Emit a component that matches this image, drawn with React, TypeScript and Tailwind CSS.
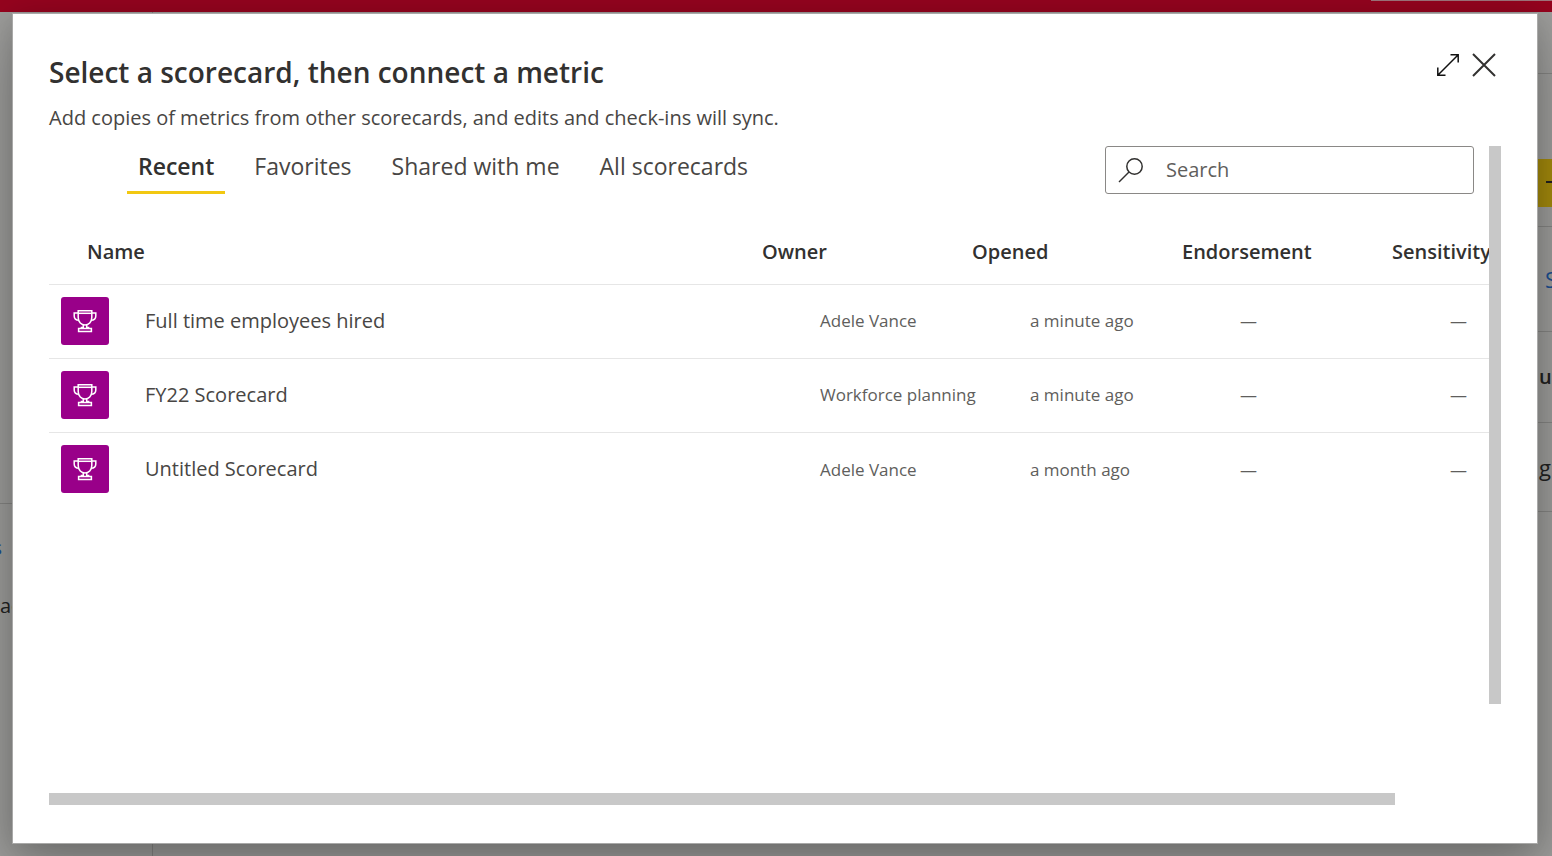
const scorecards = [
  { name: 'Full time employees hired', owner: 'Adele Vance', opened: 'a minute ago' },
  { name: 'FY22 Scorecard', owner: 'Workforce planning', opened: 'a minute ago' },
  { name: 'Untitled Scorecard', owner: 'Adele Vance', opened: 'a month ago' },
];

const tabs = ['Recent', 'Favorites', 'Shared with me', 'All scorecards'];

function TrophyIcon() {
  return (
    <svg width="24" height="24" viewBox="0 0 24 24" fill="none" stroke="#fff" strokeWidth="1.5" aria-hidden="true">
      <path d="M5.2 1.8H18.8V8.6C18.8 13 15.6 16 12 16S5.2 13 5.2 8.6Z" />
      <path d="M5.2 4.3H18.8" />
      <path d="M5.2 4H1.2V7C1.2 9.8 3 11.2 6 11.2M18.8 4H22.8V7C22.8 9.8 21 11.2 18 11.2" />
      <path d="M10.3 16V18.6H8.4V19.4M13.7 16V18.6H15.6V19.4" />
      <path d="M5.6 19.4H18.4V22.4H5.6Z" />
    </svg>
  );
}

function BackgroundPage() {
  return (
    <div className="fixed inset-0 flex flex-col overflow-hidden bg-[#9e9e9c] text-[20px] text-[#222]" aria-hidden="true">
      <div className="flex h-3 shrink-0 justify-end bg-[#96051f]">
        <div className="h-px w-[181px] bg-[#a0757c]" />
      </div>
      <div className="flex min-h-0 flex-1 justify-between">
        <div className="flex w-[153px] flex-col border-r border-[#868684]">
          <div className="h-[492px] shrink-0 border-b border-[#868684]" />
          <div className="mt-[30px] flex h-7 w-[2px] items-center justify-end overflow-hidden text-[#1d4f91]">s</div>
          <div className="mt-[30px] flex h-7 items-center">ac</div>
        </div>
        <div className="flex w-[15px] flex-col overflow-hidden">
          <div className="h-[62px] shrink-0 border-b border-[#868684]" />
          <div className="mt-[85px] flex h-12 shrink-0 items-center justify-end bg-[#a58b0c]">
            <div className="mb-[2px] h-[2px] w-[6px] bg-[#222]" />
          </div>
          <div className="h-5 shrink-0 border-b border-[#868684]" />
          <div className="flex h-[105px] shrink-0 items-center border-b border-[#868684] pl-2 text-[22px] text-[#1d4f91]">S</div>
          <div className="flex h-[91px] shrink-0 items-center border-b border-[#868684] pl-[2px] font-semibold">u</div>
          <div className="flex h-[89px] shrink-0 items-center border-b border-[#868684] pl-[2px] text-[22px]">g</div>
        </div>
      </div>
    </div>
  );
}

export default function App() {
  return (
    <div className="font-['Open_Sans','Noto_Sans',sans-serif] text-[#323130]">
      <BackgroundPage />
      <div className="fixed inset-0 flex pt-[13px] pr-[14px] pb-3 pl-3">
        <div
          role="dialog"
          aria-labelledby="dialog-title"
          className="flex min-w-0 flex-1 flex-col border border-[#a9a9a8] bg-white px-9 pb-[38px] shadow-[0_25px_58px_rgba(0,0,0,0.22),0_5px_30px_rgba(0,0,0,0.18)]"
        >
          <header className="flex h-[132px] shrink-0 justify-between">
            <div className="pt-[38px]">
              <h1 id="dialog-title" className="text-[28px] leading-10 font-semibold">
                Select a scorecard, then connect a metric
              </h1>
              <p className="mt-3 text-[20px] leading-7 text-[#484644]">
                Add copies of metrics from other scorecards, and edits and check-ins will sync.
              </p>
            </div>
            <div className="flex h-6 gap-3 pt-[39px] pr-[5px]">
              <button aria-label="Expand" className="size-6">
                <svg width="24" height="24" viewBox="0 0 24 24" fill="none" stroke="#111" strokeWidth="1.5">
                  <path d="M2 22L22 2M14.5 1.8H22.2V9.5M1.8 14.5V22.2H9.5" />
                </svg>
              </button>
              <button aria-label="Close" className="size-6">
                <svg width="24" height="24" viewBox="0 0 24 24" fill="none" stroke="#323130" strokeWidth="2">
                  <path d="M1 1L23 23M23 1L1 23" />
                </svg>
              </button>
            </div>
          </header>

          <div className="flex h-[558px] shrink-0">
            <div className="min-w-0 flex-1 overflow-hidden">
              <div className="flex justify-between pr-[15px] pl-[78px]">
                <div role="tablist" className="flex h-12 gap-[18px]">
                  {tabs.map((tab, i) => (
                    <button
                      key={tab}
                      role="tab"
                      aria-selected={i === 0}
                      className={
                        i === 0
                          ? 'border-b-3 border-[#f2c811] px-[11px] pb-1 text-[23px] font-semibold'
                          : 'border-b-3 border-transparent px-[11px] pb-1 text-[23px] text-[#484644]'
                      }
                    >
                      {tab}
                    </button>
                  ))}
                </div>
                <label className="flex h-12 w-[369px] items-center rounded-[3px] border border-[#8a8886] pl-3">
                  <svg className="shrink-0" width="26" height="26" viewBox="0 0 26 26" fill="none" stroke="#323130" strokeWidth="1.5">
                    <circle cx="16.5" cy="9.5" r="7.7" />
                    <path d="M11 15L1 25" />
                  </svg>
                  <input
                    type="text"
                    aria-label="Search"
                    placeholder="Search"
                    className="ml-[22px] w-full min-w-0 text-[20px] outline-none placeholder:text-[#605e5c]"
                  />
                </label>
              </div>

              <table className="mt-[26px] w-full table-fixed border-collapse text-left whitespace-nowrap">
                <colgroup>
                  <col />
                  <col className="w-[210px]" />
                  <col className="w-[210px]" />
                  <col className="w-[210px]" />
                  <col className="w-[97px]" />
                </colgroup>
                <thead>
                  <tr className="h-16 border-b border-[#e6e6e6] text-[20px]">
                    <th className="pl-[38px] font-semibold">Name</th>
                    <th className="font-semibold">Owner</th>
                    <th className="font-semibold">Opened</th>
                    <th className="font-semibold">Endorsement</th>
                    <th className="font-semibold">Sensitivity</th>
                  </tr>
                </thead>
                <tbody>
                  {scorecards.map((card) => (
                    <tr key={card.name} className="h-[74px] border-b border-[#e6e6e6] text-[17px] text-[#605e5c] last:border-0">
                      <td className="pl-3">
                        <div className="flex items-center gap-9">
                          <span className="flex size-12 items-center justify-center rounded-[3px] bg-[#990089]">
                            <TrophyIcon />
                          </span>
                          <span className="text-[20px] text-[#484644]">{card.name}</span>
                        </div>
                      </td>
                      <td className="pl-[58px]">{card.owner}</td>
                      <td className="pl-[58px]">{card.opened}</td>
                      <td className="pl-[58px]">—</td>
                      <td className="pl-[58px]">—</td>
                    </tr>
                  ))}
                </tbody>
              </table>
            </div>
            <div className="w-3 shrink-0 bg-[#c8c8c8]" />
          </div>

          <div className="mt-auto mr-[106px] h-3 shrink-0 bg-[#c8c8c8]" />
        </div>
      </div>
    </div>
  );
}
